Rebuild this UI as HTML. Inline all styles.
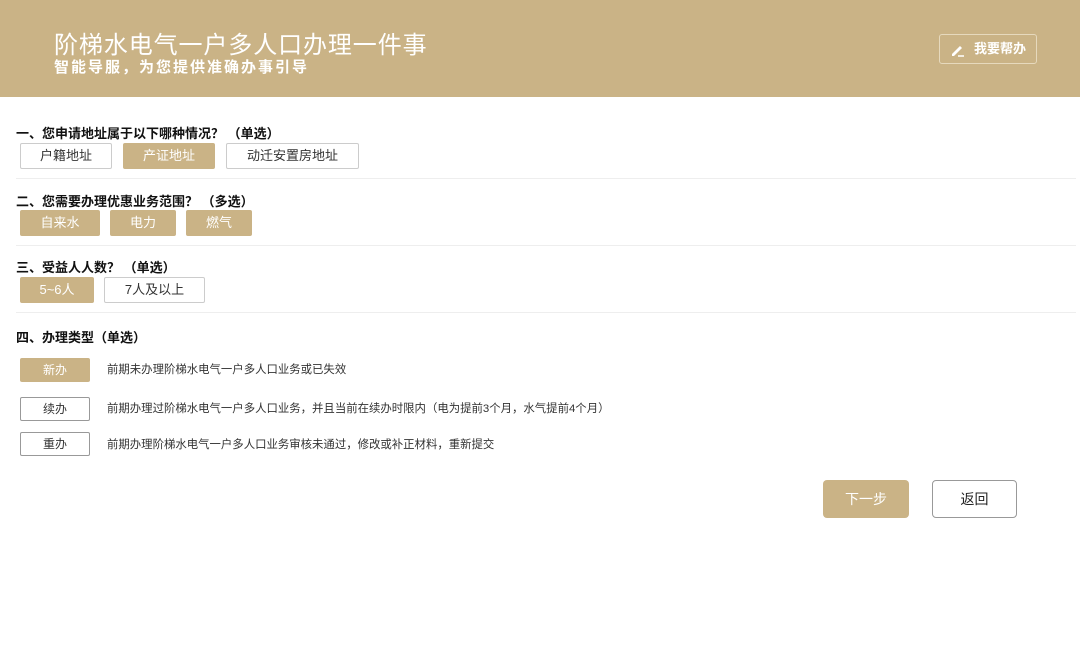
<!DOCTYPE html>
<html><head><meta charset="utf-8"><style>
*{margin:0;padding:0;box-sizing:border-box}
body{width:1080px;height:664px;background:#fff;font-family:"Liberation Sans","Noto Sans CJK SC",sans-serif;position:relative;overflow:hidden;color:#222}
.hd{position:absolute;left:0;top:0;width:1080px;height:97px;background:#cab386}
.t1{position:absolute;left:54px;top:25px;font-size:24px;color:#fff;letter-spacing:0.9px}
.t2{position:absolute;left:54px;top:56px;font-size:15px;color:#fff;letter-spacing:2px;font-weight:bold}
.help{position:absolute;left:939px;top:34px;width:98px;height:30px;border:1px solid #e6d9bd;border-radius:3px;color:#fff;font-size:13px;font-weight:bold;line-height:28px;padding-left:34px}
.help svg{position:absolute;left:10px;top:7px}
.q{position:absolute;left:16px;font-size:13px;font-weight:bold;color:#111}
.b{position:absolute;height:26px;border:1px solid #ccc;border-radius:2px;font-size:13px;text-align:center;line-height:24px;color:#333;background:#fff}
.s{background:#cab386;border-color:#cab386;color:#fff}
.hr{position:absolute;left:16px;width:1060px;height:1px;background:#eee}
.d{position:absolute;left:107px;font-size:11.4px;color:#333}
.sb{height:24px;line-height:22px;font-size:12px;border-color:#999}
.sb.s{border-color:#cab386}
.big{position:absolute;top:480px;height:38px;width:86px;border-radius:4px;font-size:14px;text-align:center;line-height:38px}
</style></head><body>
<div class="hd">
<div class="t1">阶梯水电气一户多人口办理一件事</div>
<div class="t2">智能导服，为您提供准确办事引导</div>
<div class="help"><svg width="16" height="16" viewBox="0 0 16 16"><path d="M2 12 L10 4 L12 6 L4 14 L2 14 Z" fill="#fff"/><path d="M8 14 H14" stroke="#fff" stroke-width="1.5"/></svg>我要帮办</div>
</div>
<div class="q" style="top:123px">一、您申请地址属于以下哪种情况？ （单选）</div>
<div class="b" style="left:20px;top:143px;width:92px">户籍地址</div>
<div class="b s" style="left:123px;top:143px;width:92px">产证地址</div>
<div class="b" style="left:226px;top:143px;width:133px">动迁安置房地址</div>
<div class="hr" style="top:178px"></div>
<div class="q" style="top:191px">二、您需要办理优惠业务范围？ （多选）</div>
<div class="b s" style="left:20px;top:210px;width:80px">自来水</div>
<div class="b s" style="left:110px;top:210px;width:66px">电力</div>
<div class="b s" style="left:186px;top:210px;width:66px">燃气</div>
<div class="hr" style="top:245px"></div>
<div class="q" style="top:257px">三、受益人人数？ （单选）</div>
<div class="b s" style="left:20px;top:277px;width:74px">5~6人</div>
<div class="b" style="left:104px;top:277px;width:101px">7人及以上</div>
<div class="hr" style="top:312px"></div>
<div class="q" style="top:327px">四、办理类型（单选）</div>
<div class="b sb s" style="left:20px;top:358px;width:70px">新办</div>
<div class="d" style="top:361px">前期未办理阶梯水电气一户多人口业务或已失效</div>
<div class="b sb" style="left:20px;top:397px;width:70px">续办</div>
<div class="d" style="top:400px">前期办理过阶梯水电气一户多人口业务，并且当前在续办时限内（电为提前3个月，水气提前4个月）</div>
<div class="b sb" style="left:20px;top:432px;width:70px">重办</div>
<div class="d" style="top:436px">前期办理阶梯水电气一户多人口业务审核未通过，修改或补正材料，重新提交</div>
<div class="big" style="left:823px;background:#cab386;color:#fff">下一步</div>
<div class="big" style="left:932px;border:1px solid #999;color:#222;width:85px;line-height:36px">返回</div>
</body></html>
